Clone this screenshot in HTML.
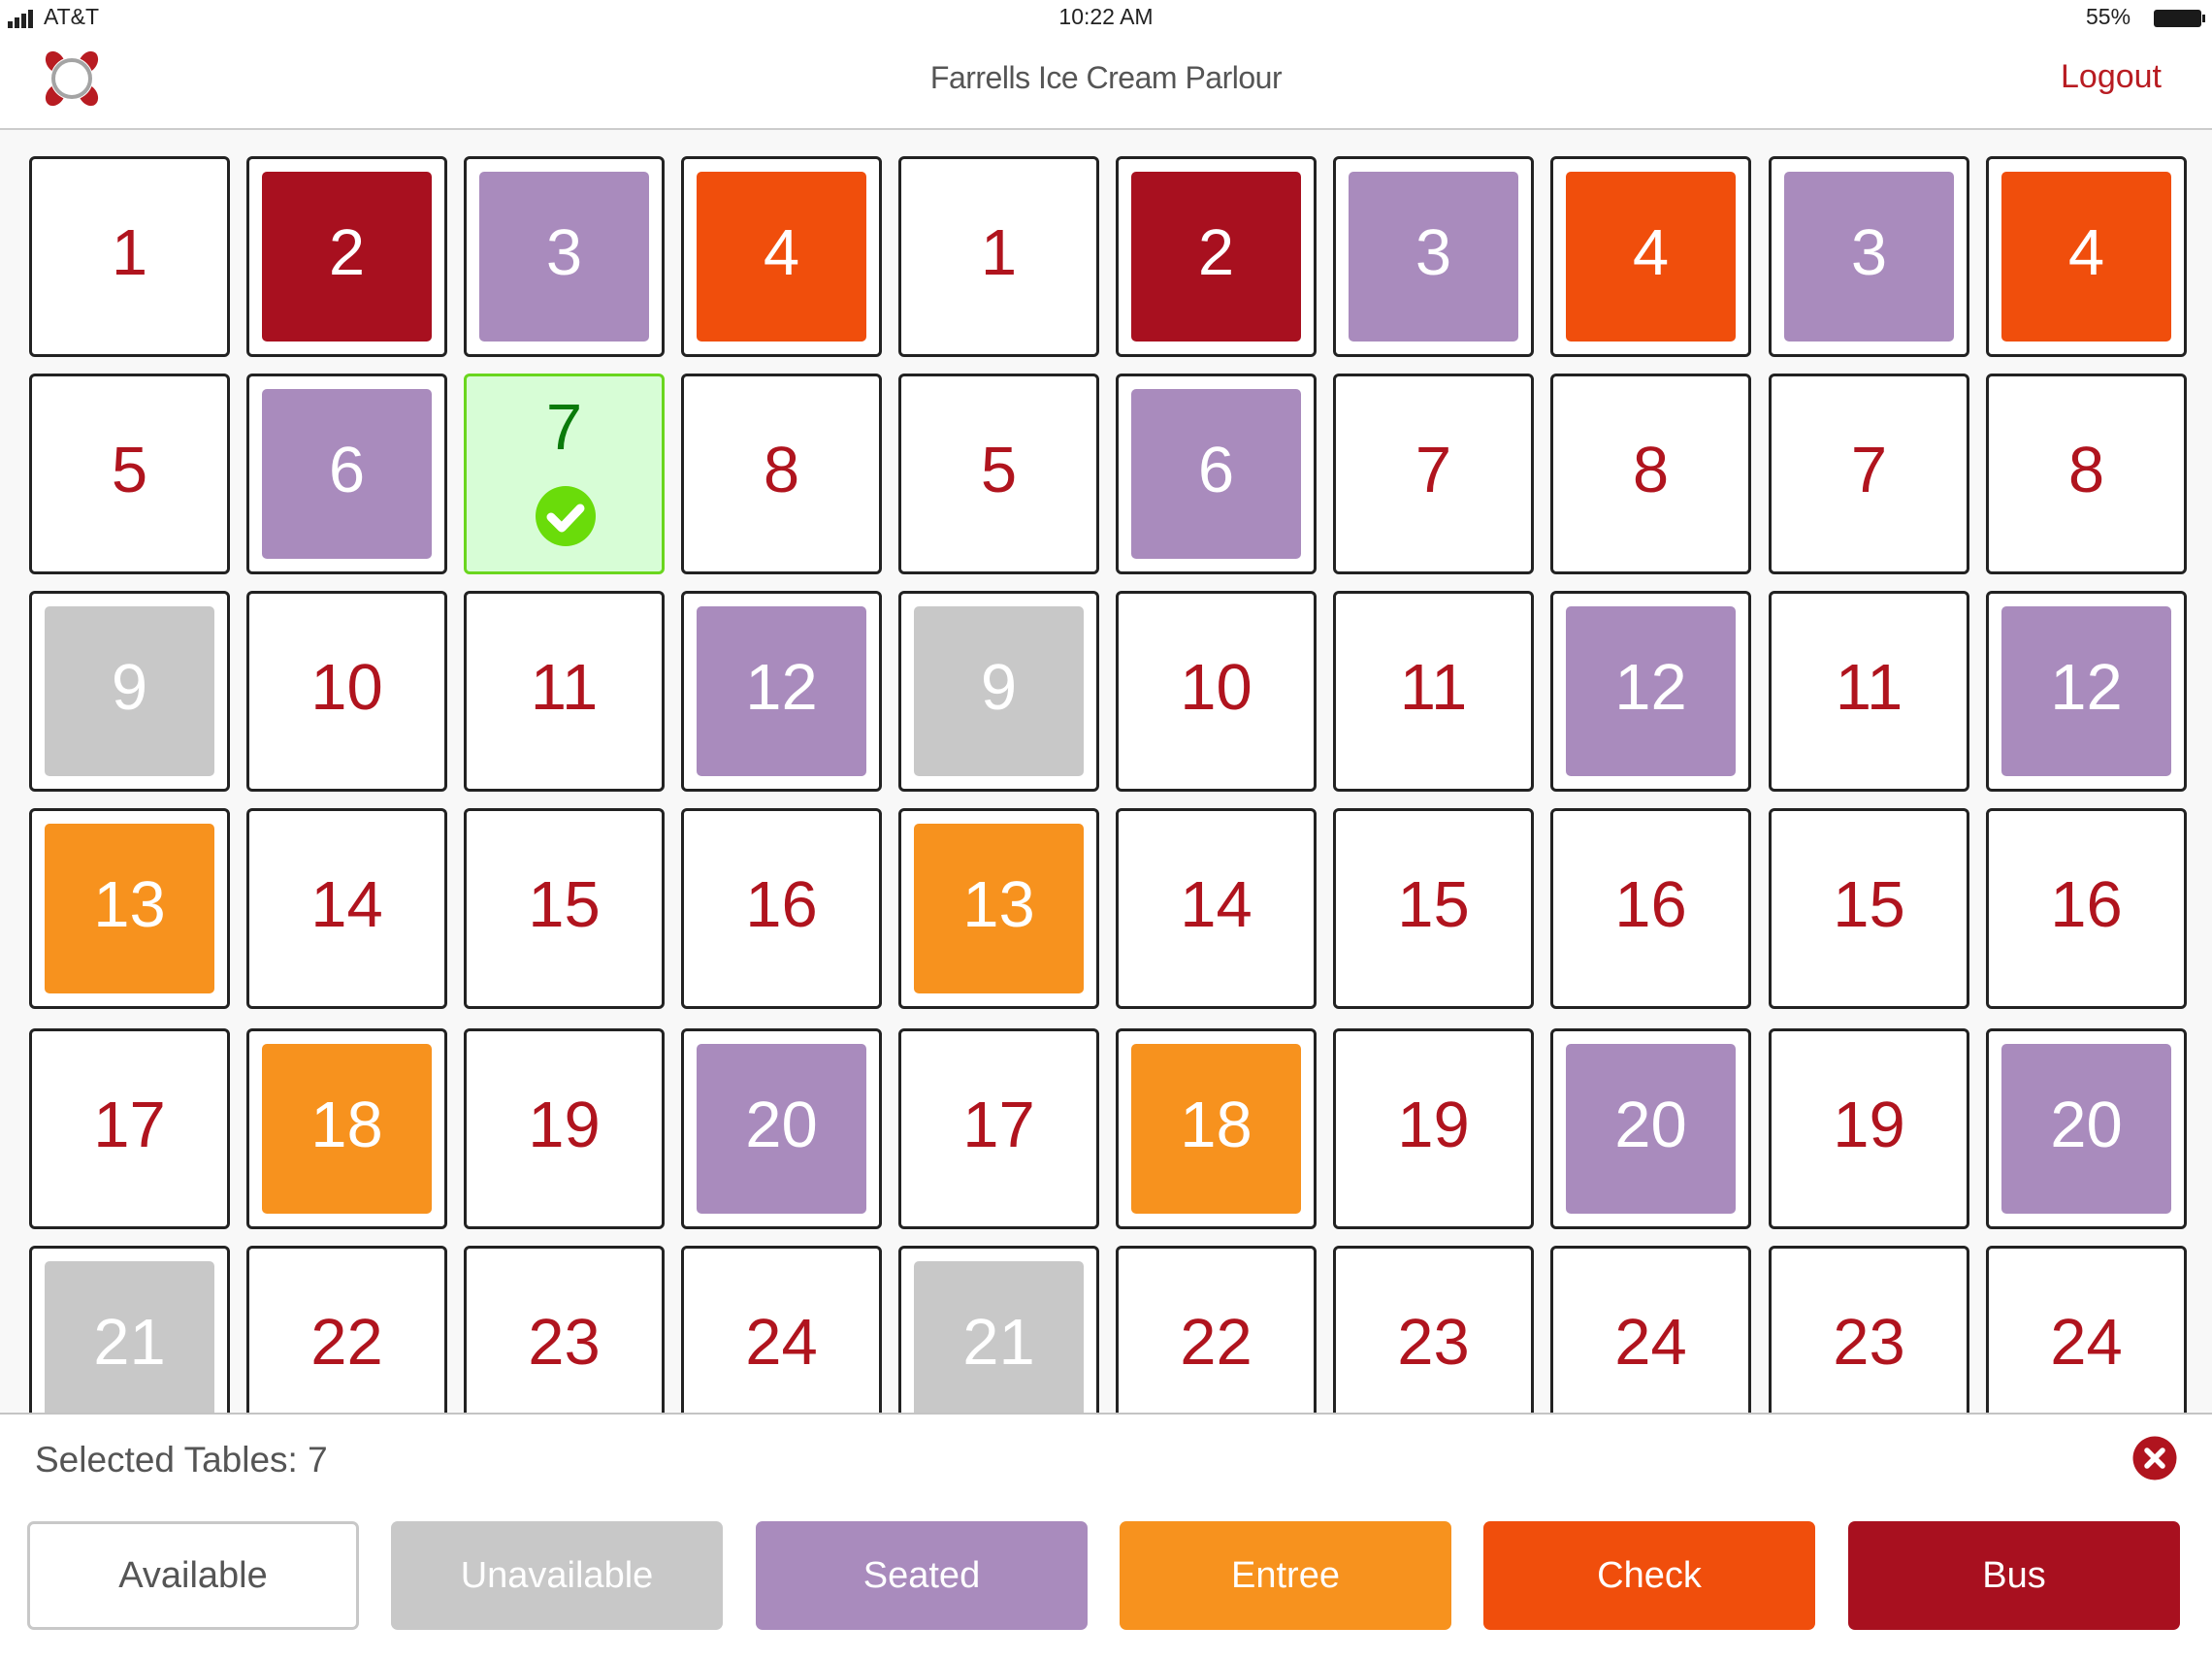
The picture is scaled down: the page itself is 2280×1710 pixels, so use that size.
<!DOCTYPE html>
<html><head><meta charset="utf-8"><style>
*{margin:0;padding:0;box-sizing:border-box}
body{width:2280px;height:1710px;position:relative;overflow:hidden;background:#fff;font-family:"Helvetica Neue","Liberation Sans",sans-serif}
.abs{position:absolute}
#grid{position:absolute;left:0;top:134px;width:2280px;height:1323px;background:#f8f8f8;overflow:hidden}
.c{position:absolute;width:207px;height:207px;border:3px solid #222;border-radius:6px;background:#fff;display:flex;align-items:center;justify-content:center;font-size:67px;color:#b0141e;padding-bottom:8px}
.c span{position:relative;z-index:1}
.c i{position:absolute;left:13px;top:13px;right:13px;bottom:13px;border-radius:5px}
.c.f span{color:#fff}
.B i{background:#a8101f}.P i{background:#a98bbd}.C i{background:#f04e0c}.E i{background:#f7921e}.G i{background:#c8c8c8}
.btn{position:absolute;top:1568px;width:342px;height:112px;border-radius:7px;display:flex;align-items:center;justify-content:center;font-size:38px;color:#fff}
</style></head><body>
<div class="abs" style="left:8px;top:10px;width:40px;height:20px">
<div class="abs" style="left:0;top:12px;width:5px;height:7px;background:#222"></div>
<div class="abs" style="left:7px;top:8px;width:5px;height:11px;background:#222"></div>
<div class="abs" style="left:14px;top:4px;width:5px;height:15px;background:#222"></div>
<div class="abs" style="left:21px;top:0;width:5px;height:19px;background:#222"></div>
</div>
<div class="abs" style="left:45px;top:4px;font-size:23px;color:#222">AT&amp;T</div>
<div class="abs" style="left:0;width:2280px;top:4px;text-align:center;font-size:23px;color:#222">10:22 AM</div>
<div class="abs" style="left:2150px;top:4px;font-size:23px;color:#222">55%</div>
<div class="abs" style="left:2220px;top:10px;width:49px;height:18px;background:#1a1a1a;border-radius:3px"></div>
<div class="abs" style="left:2270px;top:15px;width:3px;height:8px;background:#1a1a1a"></div>
<svg class="abs" style="left:44px;top:51px" width="60" height="60" viewBox="0 0 60 60">
<g fill="#b81c22">
<ellipse cx="13" cy="13" rx="9" ry="12" transform="rotate(-35 13 13)"/>
<ellipse cx="47" cy="13" rx="9" ry="12" transform="rotate(35 47 13)"/>
<ellipse cx="13" cy="47" rx="9" ry="12" transform="rotate(35 13 47)"/>
<ellipse cx="47" cy="47" rx="9" ry="12" transform="rotate(-35 47 47)"/>
</g>
<circle cx="30" cy="30" r="22" fill="#fff"/>
<circle cx="30" cy="30" r="19" fill="none" stroke="#a4a4a4" stroke-width="4"/>
</svg>
<div class="abs" style="left:0;width:2280px;top:62px;text-align:center;font-size:32px;color:#555;letter-spacing:-0.5px">Farrells Ice Cream Parlour</div>
<div class="abs" style="left:2124px;top:60px;font-size:34px;color:#b81c22">Logout</div>
<div class="abs" style="left:0;top:132px;width:2280px;height:3px;background:#ccc"></div>

<div id="grid">
<div class="c" style="left:30px;top:27px"><span>1</span></div>
<div class="c B f" style="left:254px;top:27px"><i></i><span>2</span></div>
<div class="c P f" style="left:478px;top:27px"><i></i><span>3</span></div>
<div class="c C f" style="left:702px;top:27px"><i></i><span>4</span></div>
<div class="c" style="left:926px;top:27px"><span>1</span></div>
<div class="c B f" style="left:1150px;top:27px"><i></i><span>2</span></div>
<div class="c P f" style="left:1374px;top:27px"><i></i><span>3</span></div>
<div class="c C f" style="left:1598px;top:27px"><i></i><span>4</span></div>
<div class="c P f" style="left:1823px;top:27px"><i></i><span>3</span></div>
<div class="c C f" style="left:2047px;top:27px"><i></i><span>4</span></div>
<div class="c" style="left:30px;top:251px"><span>5</span></div>
<div class="c P f" style="left:254px;top:251px"><i></i><span>6</span></div>
<div class="c" style="left:478px;top:251px;border-color:#6ad61e;background:#d7fdd6;color:#0a7a0a;align-items:flex-start;padding-bottom:0"><span style="margin-top:14px">7</span>
<svg class="abs" style="left:70px;top:112px" width="64" height="64" viewBox="0 0 64 64"><circle cx="32" cy="32" r="31" fill="#6adc0a"/><path d="M17 33 L28 44 L47 24" fill="none" stroke="#fff" stroke-width="9" stroke-linecap="round" stroke-linejoin="round"/></svg></div>
<div class="c" style="left:702px;top:251px"><span>8</span></div>
<div class="c" style="left:926px;top:251px"><span>5</span></div>
<div class="c P f" style="left:1150px;top:251px"><i></i><span>6</span></div>
<div class="c" style="left:1374px;top:251px"><span>7</span></div>
<div class="c" style="left:1598px;top:251px"><span>8</span></div>
<div class="c" style="left:1823px;top:251px"><span>7</span></div>
<div class="c" style="left:2047px;top:251px"><span>8</span></div>
<div class="c G f" style="left:30px;top:475px"><i></i><span>9</span></div>
<div class="c" style="left:254px;top:475px"><span>10</span></div>
<div class="c" style="left:478px;top:475px"><span>11</span></div>
<div class="c P f" style="left:702px;top:475px"><i></i><span>12</span></div>
<div class="c G f" style="left:926px;top:475px"><i></i><span>9</span></div>
<div class="c" style="left:1150px;top:475px"><span>10</span></div>
<div class="c" style="left:1374px;top:475px"><span>11</span></div>
<div class="c P f" style="left:1598px;top:475px"><i></i><span>12</span></div>
<div class="c" style="left:1823px;top:475px"><span>11</span></div>
<div class="c P f" style="left:2047px;top:475px"><i></i><span>12</span></div>
<div class="c E f" style="left:30px;top:699px"><i></i><span>13</span></div>
<div class="c" style="left:254px;top:699px"><span>14</span></div>
<div class="c" style="left:478px;top:699px"><span>15</span></div>
<div class="c" style="left:702px;top:699px"><span>16</span></div>
<div class="c E f" style="left:926px;top:699px"><i></i><span>13</span></div>
<div class="c" style="left:1150px;top:699px"><span>14</span></div>
<div class="c" style="left:1374px;top:699px"><span>15</span></div>
<div class="c" style="left:1598px;top:699px"><span>16</span></div>
<div class="c" style="left:1823px;top:699px"><span>15</span></div>
<div class="c" style="left:2047px;top:699px"><span>16</span></div>
<div class="c" style="left:30px;top:926px"><span>17</span></div>
<div class="c E f" style="left:254px;top:926px"><i></i><span>18</span></div>
<div class="c" style="left:478px;top:926px"><span>19</span></div>
<div class="c P f" style="left:702px;top:926px"><i></i><span>20</span></div>
<div class="c" style="left:926px;top:926px"><span>17</span></div>
<div class="c E f" style="left:1150px;top:926px"><i></i><span>18</span></div>
<div class="c" style="left:1374px;top:926px"><span>19</span></div>
<div class="c P f" style="left:1598px;top:926px"><i></i><span>20</span></div>
<div class="c" style="left:1823px;top:926px"><span>19</span></div>
<div class="c P f" style="left:2047px;top:926px"><i></i><span>20</span></div>
<div class="c G f" style="left:30px;top:1150px"><i></i><span>21</span></div>
<div class="c" style="left:254px;top:1150px"><span>22</span></div>
<div class="c" style="left:478px;top:1150px"><span>23</span></div>
<div class="c" style="left:702px;top:1150px"><span>24</span></div>
<div class="c G f" style="left:926px;top:1150px"><i></i><span>21</span></div>
<div class="c" style="left:1150px;top:1150px"><span>22</span></div>
<div class="c" style="left:1374px;top:1150px"><span>23</span></div>
<div class="c" style="left:1598px;top:1150px"><span>24</span></div>
<div class="c" style="left:1823px;top:1150px"><span>23</span></div>
<div class="c" style="left:2047px;top:1150px"><span>24</span></div>
</div>

<div class="abs" style="left:0;top:1456px;width:2280px;height:2px;background:#c4c4c4"></div>
<div class="abs" style="left:36px;top:1484px;font-size:37px;color:#555">Selected Tables: 7</div>
<svg class="abs" style="left:2198px;top:1480px" width="46" height="46" viewBox="0 0 46 46"><circle cx="23" cy="23" r="22.5" fill="#b0141e"/><path d="M15 15 L31 31 M31 15 L15 31" stroke="#fff" stroke-width="5.5" stroke-linecap="round"/></svg>

<div class="btn" style="left:28px;background:#fff;border:3px solid #c8c8c8;color:#555">Available</div>
<div class="btn" style="left:403px;background:#c8c8c8">Unavailable</div>
<div class="btn" style="left:779px;background:#a98bbd">Seated</div>
<div class="btn" style="left:1154px;background:#f7921e">Entree</div>
<div class="btn" style="left:1529px;background:#f04e0c">Check</div>
<div class="btn" style="left:1905px;background:#a8101f">Bus</div>
</body></html>
